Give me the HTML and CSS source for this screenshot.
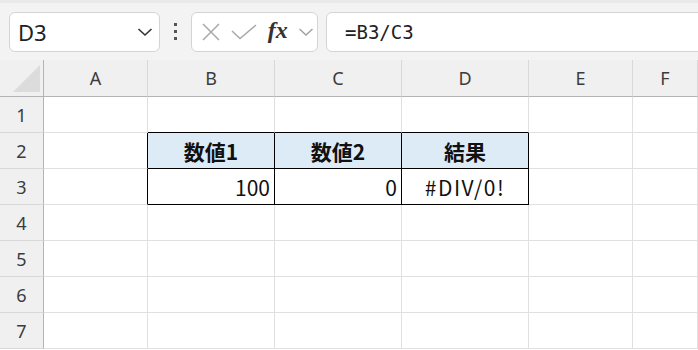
FILE: index.html
```html
<!DOCTYPE html>
<html lang="ja">
<head>
  <meta charset="UTF-8" />
  <meta name="viewport" content="width=device-width, initial-scale=1.0"/>
  <title>Sheet</title>
  <link rel="stylesheet" href="styles.css">
</head>
<body>
  <!-- Formula bar -->
  <div class="toolbar">
    <div class="name-box">
      <span>D3</span>
      <svg class="chev" width="16" height="10" viewBox="0 0 16 10"><polyline points="1.5,2 8,8 14.5,2" fill="none" stroke="#333" stroke-width="1.6"/></svg>
    </div>
    <div class="dots"><i></i><i></i><i></i></div>
    <div class="fx-box">
      <svg width="20" height="20" viewBox="0 0 20 20"><path d="M2 2 L18 18 M18 2 L2 18" stroke="#a8a8a8" stroke-width="1.5" fill="none"/></svg>
      <svg width="26" height="16" viewBox="0 0 26 16"><polyline points="1,7 9,14.5 25,1" stroke="#a8a8a8" stroke-width="1.5" fill="none"/></svg>
      <span class="fx">fx</span>
      <svg width="16" height="10" viewBox="0 0 16 10"><polyline points="1.5,2 8,8 14.5,2" fill="none" stroke="#a0a0a0" stroke-width="1.4"/></svg>
    </div>
    <div class="formula">=B3/C3</div>
  </div>

  <!-- Grid -->
  <div class="sheet">
    <div class="corner"><span class="tri"></span></div>
    <div class="col-h">A</div>
    <div class="col-h">B</div>
    <div class="col-h">C</div>
    <div class="col-h">D</div>
    <div class="col-h">E</div>
    <div class="col-h">F</div>

    <div class="row-h">1</div>
    <div class="cell"></div>
    <div class="cell edge-b"></div>
    <div class="cell edge-b"></div>
    <div class="cell edge-b"></div>
    <div class="cell"></div>
    <div class="cell"></div>

    <div class="row-h">2</div>
    <div class="cell edge-r"></div>
    <div class="cell tbl head">数値1</div>
    <div class="cell tbl head">数値2</div>
    <div class="cell tbl head">結果</div>
    <div class="cell"></div>
    <div class="cell"></div>

    <div class="row-h">3</div>
    <div class="cell edge-r"></div>
    <div class="cell tbl num">100</div>
    <div class="cell tbl num">0</div>
    <div class="cell tbl err">#DIV/0!</div>
    <div class="cell"></div>
    <div class="cell"></div>

    <div class="row-h">4</div>
    <div class="cell"></div><div class="cell"></div><div class="cell"></div><div class="cell"></div><div class="cell"></div><div class="cell"></div>
    <div class="row-h">5</div>
    <div class="cell"></div><div class="cell"></div><div class="cell"></div><div class="cell"></div><div class="cell"></div><div class="cell"></div>
    <div class="row-h">6</div>
    <div class="cell"></div><div class="cell"></div><div class="cell"></div><div class="cell"></div><div class="cell"></div><div class="cell"></div>
    <div class="row-h">7</div>
    <div class="cell"></div><div class="cell"></div><div class="cell"></div><div class="cell"></div><div class="cell"></div><div class="cell"></div>
  </div>
</body>
</html>
```

FILE: styles.css
```css
body {
  margin: 0;
  width: 698px;
  height: 350px;
  overflow: hidden;
  background: #fff;
  font-family: "Noto Sans", "Open Sans", sans-serif;
}

/* Formula bar */
.toolbar {
  display: flex;
  align-items: center;
  height: 60px;
  box-sizing: border-box;
  padding: 10px 0 10px 9px;
  background: #f3f3f3;
  border-top: 3px solid #e8eaea;
}

.name-box,
.fx-box,
.formula {
  height: 40px;
  box-sizing: border-box;
  background: #fff;
  border: 1px solid #d4d4d4;
  border-radius: 6px;
  display: flex;
  align-items: center;
}

.name-box {
  width: 151px;
  padding: 0 6px 0 8px;
  justify-content: space-between;
  font-size: 22px;
  color: #222;
}

.dots {
  width: 31px;
  display: flex;
  flex-direction: column;
  align-items: center;
  gap: 4px;
}

.dots i {
  width: 3px;
  height: 3px;
  background: #555;
}

.fx-box {
  width: 127px;
  padding: 0 3px 0 9px;
  gap: 0;
  justify-content: space-between;
}

.fx {
  font-family: "Liberation Serif", serif;
  font-style: italic;
  font-weight: bold;
  font-size: 24px;
  color: #333;
  margin-top: -2px;
}

.formula {
  flex: 1;
  margin-left: 8px;
  margin-right: -4px;
  border-radius: 6px 0 0 6px;
  padding-left: 18px;
  font-family: "DejaVu Sans Mono", monospace;
  font-size: 19px;
  color: #222;
}

/* Grid */
.sheet {
  display: grid;
  grid-template-columns: 44px 104px 127px 127px 127px 104px 1fr;
  grid-template-rows: 37px;
  grid-auto-rows: 36px;
}

.sheet > div {
  box-sizing: border-box;
  border-right: 1px solid #e0e0e0;
  border-bottom: 1px solid #e0e0e0;
  display: flex;
  align-items: center;
}

.corner {
  background: #f0f0f0;
  position: relative;
  border-right-color: #b4b4b4 !important;
  border-bottom-color: #b4b4b4 !important;
}

.tri {
  position: absolute;
  right: 3px;
  bottom: 4px;
  width: 0;
  height: 0;
  border-left: 27px solid transparent;
  border-bottom: 27px solid #dcdcdc;
}

.col-h,
.row-h {
  background: #f0f0f0;
  color: #3c3c3c;
  font-size: 18px;
  justify-content: center;
}

.col-h {
  border-right-color: #d8d8d8 !important;
  border-bottom-color: #b4b4b4 !important;
}

.row-h {
  border-right-color: #b4b4b4 !important;
  border-bottom-color: #d8d8d8 !important;
}

.cell {
  font-family: "Noto Sans CJK JP", sans-serif;
  font-size: 21px;
  color: #111;
}

.edge-b {
  border-bottom-color: #000 !important;
}

.edge-r {
  border-right-color: #000 !important;
}

.tbl {
  border-right-color: #000 !important;
  border-bottom-color: #000 !important;
}

.head {
  background: #ddebf7;
  font-weight: bold;
  justify-content: center;
}

.num {
  justify-content: flex-end;
  padding-right: 4px;
}

.err {
  justify-content: center;
  letter-spacing: 1.5px;
}
```
